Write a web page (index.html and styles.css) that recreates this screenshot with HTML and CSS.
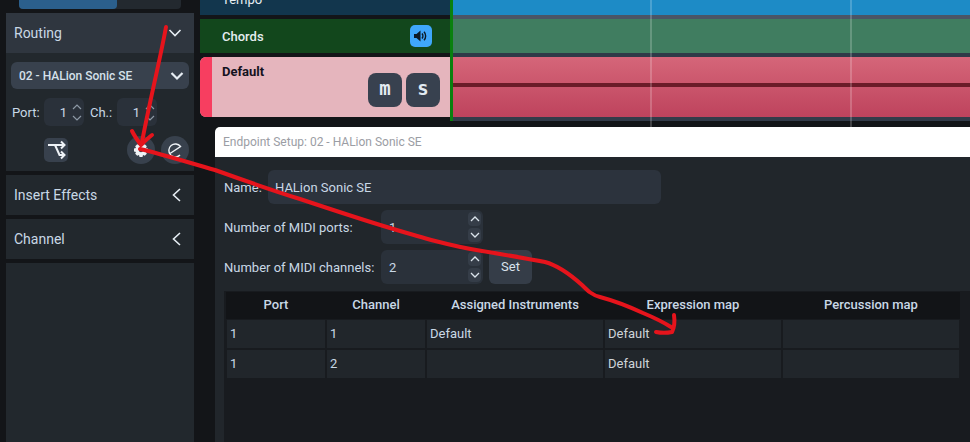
FILE: index.html
```html
<!DOCTYPE html>
<html lang="en">
<head>
    <meta charset="UTF-8">
    <title>Endpoint Setup</title>
    <link rel="stylesheet" href="styles.css">
</head>
<body>
    <div class="app">
        <aside class="sidebar">
            <div class="tabs"><div class="tab-active"></div></div>

            <section class="panel">
                <div class="panel-head panel-head-open">
                    <span>Routing</span>
                    <svg class="chev" width="14" height="10" viewBox="0 0 14 10"><path d="M1.500 2 7 7.500 12.500 2"/></svg>
                </div>
                <div class="routing-body">
                    <div class="device-select">
                        <span>02 - HALion Sonic SE</span>
                        <svg class="chev chev-bold" width="14" height="10" viewBox="0 0 14 10"><path d="M1.500 2 7 7.500 12.500 2"/></svg>
                    </div>
                    <div class="port-row">
                        <label class="port-label">Port:</label>
                        <div class="mini-spin">
                            <span class="mini-value">1</span>
                            <div class="mini-arrows">
                                <svg width="10" height="9" viewBox="0 0 10 9"><path d="M1 6 5 2 9 6"/></svg>
                                <svg width="10" height="9" viewBox="0 0 10 9"><path d="M1 3 5 7 9 3"/></svg>
                            </div>
                        </div>
                        <label class="port-label ch-label">Ch.:</label>
                        <div class="mini-spin">
                            <span class="mini-value">1</span>
                            <div class="mini-arrows">
                                <svg width="10" height="9" viewBox="0 0 10 9"><path d="M1 6 5 2 9 6"/></svg>
                                <svg width="10" height="9" viewBox="0 0 10 9"><path d="M1 3 5 7 9 3"/></svg>
                            </div>
                        </div>
                    </div>
                    <div class="tool-row">
                        <div class="tool-square">
                            <svg width="24" height="24" viewBox="0 0 24 24" fill="none" stroke="#eef2f6" stroke-width="2"><path d="M4 7H20"/><path d="M11 7 15.500 17H20"/><path d="M17 3.500 20.500 7 17 10.500"/><path d="M17 13.500 20.500 17 17 20.500"/></svg>
                        </div>
                        <div class="tool-round gear-btn">
                            <svg width="14" height="14" viewBox="0 0 14 14"><path fill="#eef2f6" fill-rule="evenodd" d="M5.500 0H8.500L9 2 10.800 1.200 12.800 3.200 12 5 14 5.500V8.500L12 9 12.800 10.800 10.800 12.800 9 12 8.500 14H5.500L5 12 3.200 12.800 1.200 10.800 2 9 0 8.500V5.500L2 5 1.200 3.200 3.200 1.200 5 2ZM7 4.800A2.200 2.200 0 1 0 7 9.200 2.200 2.200 0 1 0 7 4.800Z"/></svg>
                        </div>
                        <div class="tool-round">
                            <svg width="18" height="18" viewBox="0 0 18 18" fill="none" stroke="#eef2f6" stroke-width="1.400"><path d="M4 12.500 14.500 5.500A6.500 6.500 0 1 0 14 14"/></svg>
                        </div>
                    </div>
                </div>
            </section>

            <section class="panel">
                <div class="panel-head">
                    <span>Insert Effects</span>
                    <svg class="chev" width="10" height="14" viewBox="0 0 10 14"><path d="M8 1 1.500 7 8 13"/></svg>
                </div>
            </section>

            <section class="panel">
                <div class="panel-head">
                    <span>Channel</span>
                    <svg class="chev" width="10" height="14" viewBox="0 0 10 14"><path d="M8 1 1.500 7 8 13"/></svg>
                </div>
            </section>

            <div class="panel-rest"></div>
        </aside>

        <main class="tracks">
            <div class="heads">
                <div class="head head-tempo"><span>Tempo</span></div>
                <div class="head head-chords">
                    <span>Chords</span>
                    <div class="speaker-btn">
                        <svg width="14" height="12" viewBox="0 0 14 12"><path fill="#0c1a26" d="M0 4H2.500L6.500 .5V11.500L2.500 8H0Z"/><path fill="none" stroke="#0c1a26" stroke-width="1.400" d="M8 3.500C9.200 4.800 9.200 7.200 8 8.500M10 1.800C12.200 4 12.200 8 10 10.200"/></svg>
                    </div>
                </div>
                <div class="head head-default">
                    <div class="head-colour"></div>
                    <div class="head-body">
                        <span class="head-name">Default</span>
                        <div class="ms-btns">
                            <div class="ms-btn">m</div>
                            <div class="ms-btn">s</div>
                        </div>
                    </div>
                </div>
            </div>
            <div class="timeline">
                <div class="lane lane-tempo"></div>
                <div class="lane lane-chords"></div>
                <div class="lane lane-default"><div class="lane-line"></div></div>
                <div class="gridline grid-a"></div>
                <div class="gridline grid-b"></div>
            </div>
        </main>
    </div>

    <div class="dialog">
        <div class="dialog-title">Endpoint Setup: 02 - HALion Sonic SE</div>
        <div class="dialog-body">
            <div class="form-row">
                <label class="name-label">Name:</label>
                <div class="name-input">HALion Sonic SE</div>
            </div>
            <div class="form-row">
                <label class="midi-label">Number of MIDI ports:</label>
                <div class="spin">
                    <span>1</span>
                    <div class="spin-arrows">
                        <div class="spin-btn"><svg width="10" height="8" viewBox="0 0 10 8"><path d="M1 6 5 2 9 6"/></svg></div>
                        <div class="spin-btn"><svg width="10" height="8" viewBox="0 0 10 8"><path d="M1 2 5 6 9 2"/></svg></div>
                    </div>
                </div>
            </div>
            <div class="form-row">
                <label class="midi-label">Number of MIDI channels:</label>
                <div class="spin">
                    <span>2</span>
                    <div class="spin-arrows">
                        <div class="spin-btn"><svg width="10" height="8" viewBox="0 0 10 8"><path d="M1 6 5 2 9 6"/></svg></div>
                        <div class="spin-btn"><svg width="10" height="8" viewBox="0 0 10 8"><path d="M1 2 5 6 9 2"/></svg></div>
                    </div>
                </div>
                <div class="set-btn">Set</div>
            </div>
        </div>
        <div class="table-wrap">
            <div class="table-row table-head">
                <div>Port</div>
                <div>Channel</div>
                <div>Assigned Instruments</div>
                <div>Expression map</div>
                <div>Percussion map</div>
            </div>
            <div class="table-row">
                <div class="cell">1</div>
                <div class="cell">1</div>
                <div class="cell">Default</div>
                <div class="cell cell-muted">Default</div>
                <div class="cell"></div>
            </div>
            <div class="table-row">
                <div class="cell">1</div>
                <div class="cell">2</div>
                <div class="cell"></div>
                <div class="cell cell-muted">Default</div>
                <div class="cell"></div>
            </div>
        </div>
    </div>

    <!-- red marker drawn over the screenshot -->
    <svg class="scribble" width="970" height="442" viewBox="0 0 970 442">
        <path d="M166 27C160 60 150 100 142 142"/>
        <path d="M132 131C135 137 138 141 141 145 145 141 148 138 152 135"/>
        <path d="M140 149C165 155 190 163 215 170 240 179 265 188 300 199 330 209 360 219 390 228 420 237 450 246 482 251 505 255 525 258 545 262 560 266 572 276 582 285 588 291 592 295 600 297 615 301 630 307 643 313 655 318 663 322 671 327"/>
        <path d="M674 315C675 322 674 328 672 332 667 333 661 333 656 332"/>
    </svg>
</body>
</html>
```

FILE: styles.css
```css
* {
    margin: 0;
    padding: 0;
    box-sizing: border-box;
    font-family: 'Roboto', 'Noto Sans', sans-serif;
}

body {
    width: 970px;
    height: 442px;
    overflow: hidden;
    background: #131518;
    color: #c9d8e6;
    font-size: 13px;
}

.app {
    display: flex;
    height: 442px;
}

/* left column */
.sidebar {
    width: 188px;
    margin-left: 6px;
    display: flex;
    flex-direction: column;
    gap: 4px;
}

.tabs {
    height: 9px;
    margin: 0 13px;
    background: #23292f;
    border-radius: 0 0 4px 4px;
}

.tab-active {
    width: 98px;
    height: 9px;
    background: #2b5f8c;
    border-radius: 0 0 4px 4px;
}

.panel {
    background: #22282d;
}

.panel-head {
    height: 40px;
    padding: 0 12px 0 8px;
    display: flex;
    align-items: center;
    justify-content: space-between;
    font-size: 14px;
    color: #c9d8e6;
}

.panel-head-open {
    background: #2f363f;
}

.chev {
    fill: none;
    stroke: #e6edf3;
    stroke-width: 1.600;
}

.chev-bold {
    stroke-width: 2.200;
}

.routing-body {
    height: 118px;
    padding: 9px 5px 0;
}

.device-select {
    height: 27px;
    padding: 0 5px 0 8px;
    background: #38414d;
    border-radius: 6px;
    display: flex;
    align-items: center;
    justify-content: space-between;
    font-size: 12px;
    font-weight: 500;
    color: #d5e0ea;
}

.port-row {
    margin-top: 9px;
    display: flex;
    align-items: center;
}

.port-label {
    width: 33px;
    padding-left: 1px;
    font-size: 13px;
}

.ch-label {
    width: 27px;
    padding-left: 0;
    margin-left: 6px;
}

.mini-spin {
    width: 40px;
    height: 28px;
    padding-right: 2px;
    background: #2a313a;
    border-radius: 6px;
    display: flex;
    align-items: center;
    justify-content: flex-end;
}

.mini-value {
    margin-right: 5px;
}

.mini-arrows {
    display: flex;
    flex-direction: column;
    gap: 1px;
}

.mini-arrows svg {
    display: block;
    fill: none;
    stroke: #8d99a5;
    stroke-width: 1.200;
}

.tool-row {
    margin-top: 10px;
    display: flex;
    align-items: center;
}

.tool-square {
    width: 24px;
    height: 24px;
    margin-left: 33px;
    background: #38414d;
    border-radius: 5px;
    display: flex;
    align-items: center;
    justify-content: center;
}

.tool-round {
    width: 28px;
    height: 28px;
    margin-left: 6px;
    background: #38414d;
    border-radius: 50%;
    display: flex;
    align-items: center;
    justify-content: center;
}

.gear-btn {
    margin-left: 59px;
}

.panel-rest {
    flex: 1;
    background: #22282d;
}

/* tracks */
.tracks {
    flex: 1;
    margin-left: 6px;
    display: flex;
}

.heads {
    width: 250px;
    display: flex;
    flex-direction: column;
    gap: 4px;
}

.head {
    flex: none;
    display: flex;
    overflow: hidden;
}

.head-tempo {
    height: 15px;
    padding: 0 0 8px 22px;
    background: #12364d;
    align-items: flex-end;
    color: #e8eef3;
    font-size: 13px;
    line-height: 15px;
}

.head-chords {
    height: 34px;
    padding: 0 18px 0 22px;
    background: #12471c;
    align-items: center;
    justify-content: space-between;
    color: #e4edf0;
    font-weight: 500;
    font-size: 13px;
}

.speaker-btn {
    width: 22px;
    height: 22px;
    background: #3fa7fb;
    border-radius: 5px;
    display: flex;
    align-items: center;
    justify-content: center;
}

.head-default {
    height: 60px;
    border-radius: 6px 0 0 6px;
    background: #e5b5bd;
}

.head-colour {
    width: 12px;
    background: #f73e60;
}

.head-body {
    flex: 1;
    display: flex;
    justify-content: space-between;
    padding: 7px 10px 0 10px;
}

.head-name {
    color: #14121e;
    font-size: 13px;
    font-weight: 700;
}

.ms-btns {
    display: flex;
    gap: 4px;
    margin-top: 9px;
}

.ms-btn {
    width: 34px;
    height: 34px;
    background: #38414f;
    border-radius: 8px;
    display: flex;
    align-items: center;
    justify-content: center;
    padding-bottom: 4px;
    color: #e3ebf2;
    font-family: 'DejaVu Sans Mono', monospace;
    font-size: 19px;
    font-weight: 700;
}

.timeline {
    flex: 1;
    margin-left: 3px;
    position: relative;
    background: #4a5666;
    box-shadow: -3px 0 0 #0a800f;
    height: 121px;
}

.lane {
    border-bottom: 4px solid #4a5666;
}

.lane-tempo {
    height: 19px;
    background: #1d8bc6;
    background-clip: padding-box;
}

.lane-chords {
    height: 38px;
    background: #407d60;
    background-clip: padding-box;
    border-bottom-color: #2f3a48;
}

.lane-default {
    height: 64px;
    background: linear-gradient(#d56679, #be435d);
    background-clip: padding-box;
    border-bottom-color: #333b49;
    padding-top: 26px;
}

.lane-line {
    height: 4px;
    background: #6b1b28;
}

.gridline {
    position: absolute;
    top: 0;
    width: 2px;
    height: 127px;
    background: rgba(255, 255, 255, 0.2);
}

.grid-a {
    left: 197px;
}

.grid-b {
    left: 397px;
}

/* dialog window */
.dialog {
    position: absolute;
    left: 215px;
    top: 127px;
    width: 755px;
    height: 315px;
    background: #21262b;
    border-radius: 5px 0 0 0;
    overflow: hidden;
}

.dialog-title {
    height: 30px;
    padding-left: 8px;
    background: #fff;
    color: #9b9da4;
    font-size: 12px;
    line-height: 30px;
}

.dialog-body {
    padding: 13px 0 0 9px;
    display: flex;
    flex-direction: column;
    gap: 6px;
}

.form-row {
    display: flex;
    align-items: center;
    height: 34px;
}

.name-label {
    width: 44px;
}

.name-input {
    width: 393px;
    height: 34px;
    padding-left: 7px;
    background: #2c333d;
    border-radius: 6px;
    line-height: 36px;
}

.midi-label {
    width: 157px;
    white-space: nowrap;
}

.spin {
    width: 102px;
    height: 34px;
    padding: 2px 2px 2px 8px;
    background: #2a313a;
    border-radius: 6px;
    display: flex;
    align-items: center;
    justify-content: space-between;
}

.spin-arrows {
    display: flex;
    flex-direction: column;
    gap: 2px;
}

.spin-btn {
    width: 13px;
    height: 14px;
    background: #353d48;
    border-radius: 4px;
    display: flex;
    align-items: center;
    justify-content: center;
}

.spin-btn svg {
    fill: none;
    stroke: #dbe4ec;
    stroke-width: 1.300;
}

.set-btn {
    width: 43px;
    height: 34px;
    margin-left: 6px;
    background: #353d48;
    border-radius: 6px;
    text-align: center;
    line-height: 34px;
    color: #d9e3ec;
}

.table-wrap {
    margin: 7px 0 0 9px;
    height: 160px;
    padding: 1px 2px;
    background: #181b1f;
    display: flex;
    flex-direction: column;
    gap: 2px;
}

.table-row {
    display: grid;
    grid-template-columns: 98px 98px 176px 176px 176px;
    column-gap: 2px;
    height: 28px;
    padding-left: 1px;
    width: 734px;
}

.table-head {
    height: 27px;
    margin-bottom: -1px;
    background: #121417;
    text-align: center;
    line-height: 25px;
    font-weight: 500;
}

.cell {
    padding-left: 3px;
    background: #21262b;
    line-height: 28px;
}

.cell-muted {
    color: #cfd4d9;
}

/* annotation */
.scribble {
    position: absolute;
    left: 0;
    top: 0;
    fill: none;
    stroke: #e6141c;
    stroke-width: 4;
    stroke-linecap: round;
    stroke-linejoin: round;
}
```
